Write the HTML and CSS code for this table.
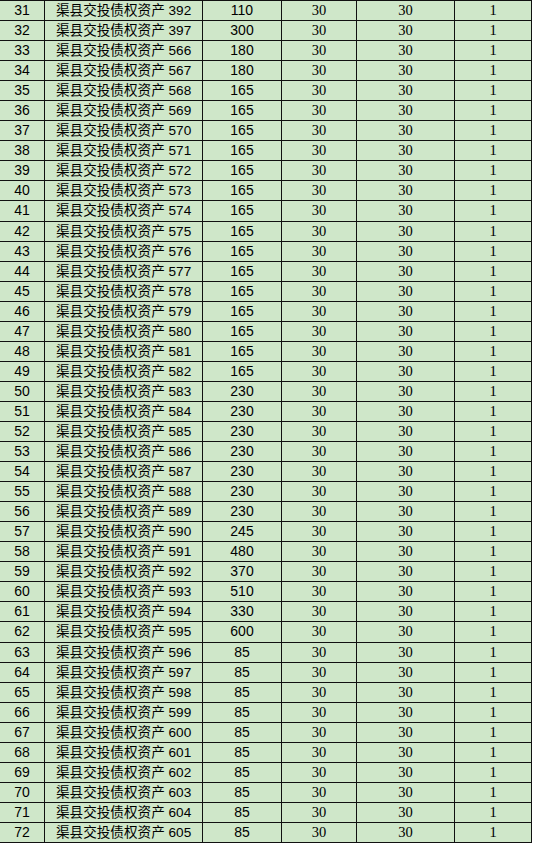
FILE: index.html
```html
<!DOCTYPE html>
<html lang="zh">
<head>
<meta charset="utf-8">
<title>渠县交投债权资产</title>
<link rel="stylesheet" href="styles.css">
</head>
<body>
<div class="sheet">
<div class="row"><div class="c num">31</div><div class="c name">渠县交投债权资产 392</div><div class="c amt">110</div><div class="c s">30</div><div class="c s">30</div><div class="c s">1</div></div>
<div class="row"><div class="c num">32</div><div class="c name">渠县交投债权资产 397</div><div class="c amt">300</div><div class="c s">30</div><div class="c s">30</div><div class="c s">1</div></div>
<div class="row"><div class="c num">33</div><div class="c name">渠县交投债权资产 566</div><div class="c amt">180</div><div class="c s">30</div><div class="c s">30</div><div class="c s">1</div></div>
<div class="row"><div class="c num">34</div><div class="c name">渠县交投债权资产 567</div><div class="c amt">180</div><div class="c s">30</div><div class="c s">30</div><div class="c s">1</div></div>
<div class="row"><div class="c num">35</div><div class="c name">渠县交投债权资产 568</div><div class="c amt">165</div><div class="c s">30</div><div class="c s">30</div><div class="c s">1</div></div>
<div class="row"><div class="c num">36</div><div class="c name">渠县交投债权资产 569</div><div class="c amt">165</div><div class="c s">30</div><div class="c s">30</div><div class="c s">1</div></div>
<div class="row"><div class="c num">37</div><div class="c name">渠县交投债权资产 570</div><div class="c amt">165</div><div class="c s">30</div><div class="c s">30</div><div class="c s">1</div></div>
<div class="row"><div class="c num">38</div><div class="c name">渠县交投债权资产 571</div><div class="c amt">165</div><div class="c s">30</div><div class="c s">30</div><div class="c s">1</div></div>
<div class="row"><div class="c num">39</div><div class="c name">渠县交投债权资产 572</div><div class="c amt">165</div><div class="c s">30</div><div class="c s">30</div><div class="c s">1</div></div>
<div class="row"><div class="c num">40</div><div class="c name">渠县交投债权资产 573</div><div class="c amt">165</div><div class="c s">30</div><div class="c s">30</div><div class="c s">1</div></div>
<div class="row"><div class="c num">41</div><div class="c name">渠县交投债权资产 574</div><div class="c amt">165</div><div class="c s">30</div><div class="c s">30</div><div class="c s">1</div></div>
<div class="row"><div class="c num">42</div><div class="c name">渠县交投债权资产 575</div><div class="c amt">165</div><div class="c s">30</div><div class="c s">30</div><div class="c s">1</div></div>
<div class="row"><div class="c num">43</div><div class="c name">渠县交投债权资产 576</div><div class="c amt">165</div><div class="c s">30</div><div class="c s">30</div><div class="c s">1</div></div>
<div class="row"><div class="c num">44</div><div class="c name">渠县交投债权资产 577</div><div class="c amt">165</div><div class="c s">30</div><div class="c s">30</div><div class="c s">1</div></div>
<div class="row"><div class="c num">45</div><div class="c name">渠县交投债权资产 578</div><div class="c amt">165</div><div class="c s">30</div><div class="c s">30</div><div class="c s">1</div></div>
<div class="row"><div class="c num">46</div><div class="c name">渠县交投债权资产 579</div><div class="c amt">165</div><div class="c s">30</div><div class="c s">30</div><div class="c s">1</div></div>
<div class="row"><div class="c num">47</div><div class="c name">渠县交投债权资产 580</div><div class="c amt">165</div><div class="c s">30</div><div class="c s">30</div><div class="c s">1</div></div>
<div class="row"><div class="c num">48</div><div class="c name">渠县交投债权资产 581</div><div class="c amt">165</div><div class="c s">30</div><div class="c s">30</div><div class="c s">1</div></div>
<div class="row"><div class="c num">49</div><div class="c name">渠县交投债权资产 582</div><div class="c amt">165</div><div class="c s">30</div><div class="c s">30</div><div class="c s">1</div></div>
<div class="row"><div class="c num">50</div><div class="c name">渠县交投债权资产 583</div><div class="c amt">230</div><div class="c s">30</div><div class="c s">30</div><div class="c s">1</div></div>
<div class="row"><div class="c num">51</div><div class="c name">渠县交投债权资产 584</div><div class="c amt">230</div><div class="c s">30</div><div class="c s">30</div><div class="c s">1</div></div>
<div class="row"><div class="c num">52</div><div class="c name">渠县交投债权资产 585</div><div class="c amt">230</div><div class="c s">30</div><div class="c s">30</div><div class="c s">1</div></div>
<div class="row"><div class="c num">53</div><div class="c name">渠县交投债权资产 586</div><div class="c amt">230</div><div class="c s">30</div><div class="c s">30</div><div class="c s">1</div></div>
<div class="row"><div class="c num">54</div><div class="c name">渠县交投债权资产 587</div><div class="c amt">230</div><div class="c s">30</div><div class="c s">30</div><div class="c s">1</div></div>
<div class="row"><div class="c num">55</div><div class="c name">渠县交投债权资产 588</div><div class="c amt">230</div><div class="c s">30</div><div class="c s">30</div><div class="c s">1</div></div>
<div class="row"><div class="c num">56</div><div class="c name">渠县交投债权资产 589</div><div class="c amt">230</div><div class="c s">30</div><div class="c s">30</div><div class="c s">1</div></div>
<div class="row"><div class="c num">57</div><div class="c name">渠县交投债权资产 590</div><div class="c amt">245</div><div class="c s">30</div><div class="c s">30</div><div class="c s">1</div></div>
<div class="row"><div class="c num">58</div><div class="c name">渠县交投债权资产 591</div><div class="c amt">480</div><div class="c s">30</div><div class="c s">30</div><div class="c s">1</div></div>
<div class="row"><div class="c num">59</div><div class="c name">渠县交投债权资产 592</div><div class="c amt">370</div><div class="c s">30</div><div class="c s">30</div><div class="c s">1</div></div>
<div class="row"><div class="c num">60</div><div class="c name">渠县交投债权资产 593</div><div class="c amt">510</div><div class="c s">30</div><div class="c s">30</div><div class="c s">1</div></div>
<div class="row"><div class="c num">61</div><div class="c name">渠县交投债权资产 594</div><div class="c amt">330</div><div class="c s">30</div><div class="c s">30</div><div class="c s">1</div></div>
<div class="row"><div class="c num">62</div><div class="c name">渠县交投债权资产 595</div><div class="c amt">600</div><div class="c s">30</div><div class="c s">30</div><div class="c s">1</div></div>
<div class="row"><div class="c num">63</div><div class="c name">渠县交投债权资产 596</div><div class="c amt">85</div><div class="c s">30</div><div class="c s">30</div><div class="c s">1</div></div>
<div class="row"><div class="c num">64</div><div class="c name">渠县交投债权资产 597</div><div class="c amt">85</div><div class="c s">30</div><div class="c s">30</div><div class="c s">1</div></div>
<div class="row"><div class="c num">65</div><div class="c name">渠县交投债权资产 598</div><div class="c amt">85</div><div class="c s">30</div><div class="c s">30</div><div class="c s">1</div></div>
<div class="row"><div class="c num">66</div><div class="c name">渠县交投债权资产 599</div><div class="c amt">85</div><div class="c s">30</div><div class="c s">30</div><div class="c s">1</div></div>
<div class="row"><div class="c num">67</div><div class="c name">渠县交投债权资产 600</div><div class="c amt">85</div><div class="c s">30</div><div class="c s">30</div><div class="c s">1</div></div>
<div class="row"><div class="c num">68</div><div class="c name">渠县交投债权资产 601</div><div class="c amt">85</div><div class="c s">30</div><div class="c s">30</div><div class="c s">1</div></div>
<div class="row"><div class="c num">69</div><div class="c name">渠县交投债权资产 602</div><div class="c amt">85</div><div class="c s">30</div><div class="c s">30</div><div class="c s">1</div></div>
<div class="row"><div class="c num">70</div><div class="c name">渠县交投债权资产 603</div><div class="c amt">85</div><div class="c s">30</div><div class="c s">30</div><div class="c s">1</div></div>
<div class="row"><div class="c num">71</div><div class="c name">渠县交投债权资产 604</div><div class="c amt">85</div><div class="c s">30</div><div class="c s">30</div><div class="c s">1</div></div>
<div class="row"><div class="c num">72</div><div class="c name">渠县交投债权资产 605</div><div class="c amt">85</div><div class="c s">30</div><div class="c s">30</div><div class="c s">1</div></div>
</div>
</body>
</html>
```

FILE: styles.css
```css
html, body {
  margin: 0;
  padding: 0;
  background: #ffffff;
}

.sheet {
  width: 532px;
  border-top: 1px solid #111;
  background: #cfe7c9;
  color: #000;
}

.row {
  display: grid;
  grid-template-columns: 45px 158px 79px 75px 98px 77px;
  border-bottom: 1px solid #111;
}

.c {
  height: 19.05px;
  line-height: 19px;
  border-right: 1px solid #111;
  text-align: center;
  white-space: nowrap;
  overflow: hidden;
}

.num, .name, .amt {
  font-family: "Liberation Sans", "Noto Sans CJK SC", sans-serif;
  font-size: 14px;
}

.name {
  text-align: left;
  padding-left: 11px;
  font-size: 13.6px;
}

.s {
  font-family: "Liberation Serif", "Noto Sans CJK SC", serif;
  font-size: 14.5px;
}
```
